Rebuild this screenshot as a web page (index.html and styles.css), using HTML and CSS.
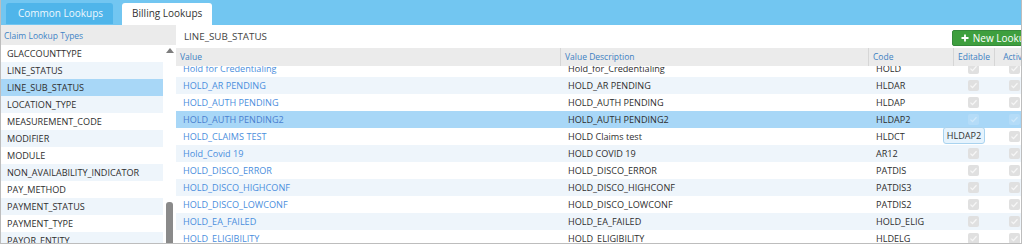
FILE: index.html
```html
<!DOCTYPE html>
<html>
<head>
<meta charset="utf-8">
<title>Lookups</title>
<link rel="stylesheet" href="styles.css">
</head>
<body>
<div class="app">
  <nav class="tabbar">
    <div class="tab">Common Lookups</div>
    <div class="tab active">Billing Lookups</div>
  </nav>
  <div class="main">
    <aside class="types">
      <div class="types-head">Claim Lookup Types</div>
      <div class="types-body">
        <ul class="type-list">
          <li>GLACCOUNTTYPE</li>
          <li>LINE_STATUS</li>
          <li class="selected">LINE_SUB_STATUS</li>
          <li>LOCATION_TYPE</li>
          <li>MEASUREMENT_CODE</li>
          <li>MODIFIER</li>
          <li>MODULE</li>
          <li>NON_AVAILABILITY_INDICATOR</li>
          <li>PAY_METHOD</li>
          <li>PAYMENT_STATUS</li>
          <li>PAYMENT_TYPE</li>
          <li>PAYOR_ENTITY</li>
        </ul>
        <div class="vscroll"><span class="arrow"></span><span class="thumb"></span></div>
      </div>
    </aside>
    <section class="detail">
      <div class="detail-inner">
        <div class="detail-head">
          <h2>LINE_SUB_STATUS</h2>
          <button class="btn-new"><svg width="8" height="8" viewBox="0 0 8 8"><path d="M4 0.5v7M0.5 4h7" stroke="#fff" stroke-width="1.8"/></svg>New Lookup</button>
        </div>
        <div class="grid">
          <div class="grid-head">
            <div class="hc">Value</div>
            <div class="hc">Value Description</div>
            <div class="hc">Code</div>
            <div class="hc center">Editable</div>
            <div class="hc center">Active</div>
          </div>
          <div class="grid-body">
            <div class="rows">
              <div class="row"><div class="c val">Hold for Credentialing</div><div class="c">Hold_for_Credentialing</div><div class="c">HOLD</div><div class="c cbc"><span class="cb"><svg viewBox="0 0 11 11"><path d="M2.5 5.6l2 2 4-4.4" fill="none" stroke-width="1.3"/></svg></span></div><div class="c cbc"><span class="cb"><svg viewBox="0 0 11 11"><path d="M2.5 5.6l2 2 4-4.4" fill="none" stroke-width="1.3"/></svg></span></div></div>
              <div class="row"><div class="c val">HOLD_AR PENDING</div><div class="c">HOLD_AR PENDING</div><div class="c">HLDAR</div><div class="c cbc"><span class="cb"><svg viewBox="0 0 11 11"><path d="M2.5 5.6l2 2 4-4.4" fill="none" stroke-width="1.3"/></svg></span></div><div class="c cbc"><span class="cb"><svg viewBox="0 0 11 11"><path d="M2.5 5.6l2 2 4-4.4" fill="none" stroke-width="1.3"/></svg></span></div></div>
              <div class="row"><div class="c val">HOLD_AUTH PENDING</div><div class="c">HOLD_AUTH PENDING</div><div class="c">HLDAP</div><div class="c cbc"><span class="cb"><svg viewBox="0 0 11 11"><path d="M2.5 5.6l2 2 4-4.4" fill="none" stroke-width="1.3"/></svg></span></div><div class="c cbc"><span class="cb"><svg viewBox="0 0 11 11"><path d="M2.5 5.6l2 2 4-4.4" fill="none" stroke-width="1.3"/></svg></span></div></div>
              <div class="row selected"><div class="c val">HOLD_AUTH PENDING2</div><div class="c">HOLD_AUTH PENDING2</div><div class="c">HLDAP2</div><div class="c cbc"><span class="cb"><svg viewBox="0 0 11 11"><path d="M2.5 5.6l2 2 4-4.4" fill="none" stroke-width="1.3"/></svg></span></div><div class="c cbc"><span class="cb"><svg viewBox="0 0 11 11"><path d="M2.5 5.6l2 2 4-4.4" fill="none" stroke-width="1.3"/></svg></span></div></div>
              <div class="row"><div class="c val">HOLD_CLAIMS TEST</div><div class="c">HOLD Claims test</div><div class="c">HLDCT</div><div class="c cbc"><span class="cb"><svg viewBox="0 0 11 11"><path d="M2.5 5.6l2 2 4-4.4" fill="none" stroke-width="1.3"/></svg></span></div><div class="c cbc"><span class="cb"><svg viewBox="0 0 11 11"><path d="M2.5 5.6l2 2 4-4.4" fill="none" stroke-width="1.3"/></svg></span></div></div>
              <div class="row"><div class="c val">Hold_Covid 19</div><div class="c">HOLD COVID 19</div><div class="c">AR12</div><div class="c cbc"><span class="cb"><svg viewBox="0 0 11 11"><path d="M2.5 5.6l2 2 4-4.4" fill="none" stroke-width="1.3"/></svg></span></div><div class="c cbc"><span class="cb"><svg viewBox="0 0 11 11"><path d="M2.5 5.6l2 2 4-4.4" fill="none" stroke-width="1.3"/></svg></span></div></div>
              <div class="row"><div class="c val">HOLD_DISCO_ERROR</div><div class="c">HOLD_DISCO_ERROR</div><div class="c">PATDIS</div><div class="c cbc"><span class="cb"><svg viewBox="0 0 11 11"><path d="M2.5 5.6l2 2 4-4.4" fill="none" stroke-width="1.3"/></svg></span></div><div class="c cbc"><span class="cb"><svg viewBox="0 0 11 11"><path d="M2.5 5.6l2 2 4-4.4" fill="none" stroke-width="1.3"/></svg></span></div></div>
              <div class="row"><div class="c val">HOLD_DISCO_HIGHCONF</div><div class="c">HOLD_DISCO_HIGHCONF</div><div class="c">PATDIS3</div><div class="c cbc"><span class="cb"><svg viewBox="0 0 11 11"><path d="M2.5 5.6l2 2 4-4.4" fill="none" stroke-width="1.3"/></svg></span></div><div class="c cbc"><span class="cb"><svg viewBox="0 0 11 11"><path d="M2.5 5.6l2 2 4-4.4" fill="none" stroke-width="1.3"/></svg></span></div></div>
              <div class="row"><div class="c val">HOLD_DISCO_LOWCONF</div><div class="c">HOLD_DISCO_LOWCONF</div><div class="c">PATDIS2</div><div class="c cbc"><span class="cb"><svg viewBox="0 0 11 11"><path d="M2.5 5.6l2 2 4-4.4" fill="none" stroke-width="1.3"/></svg></span></div><div class="c cbc"><span class="cb"><svg viewBox="0 0 11 11"><path d="M2.5 5.6l2 2 4-4.4" fill="none" stroke-width="1.3"/></svg></span></div></div>
              <div class="row"><div class="c val">HOLD_EA_FAILED</div><div class="c">HOLD_EA_FAILED</div><div class="c">HOLD_ELIG</div><div class="c cbc"><span class="cb"><svg viewBox="0 0 11 11"><path d="M2.5 5.6l2 2 4-4.4" fill="none" stroke-width="1.3"/></svg></span></div><div class="c cbc"><span class="cb"><svg viewBox="0 0 11 11"><path d="M2.5 5.6l2 2 4-4.4" fill="none" stroke-width="1.3"/></svg></span></div></div>
              <div class="row"><div class="c val">HOLD_ELIGIBILITY</div><div class="c">HOLD_ELIGIBILITY</div><div class="c">HLDELG</div><div class="c cbc"><span class="cb"><svg viewBox="0 0 11 11"><path d="M2.5 5.6l2 2 4-4.4" fill="none" stroke-width="1.3"/></svg></span></div><div class="c cbc"><span class="cb"><svg viewBox="0 0 11 11"><path d="M2.5 5.6l2 2 4-4.4" fill="none" stroke-width="1.3"/></svg></span></div></div>
            </div>
          </div>
        </div>
      </div>
      <div class="tooltip">HLDAP2</div>
    </section>
  </div>
</div>
</body>
</html>
```

FILE: styles.css
```css
* { box-sizing: border-box; }
html, body { margin: 0; padding: 0; background: #fff; }
body { font-family: "Open Sans", "Liberation Sans", sans-serif; color: #333; }

.app {
  width: 1022px;
  height: 244px;
  border: 1px solid #bdbdbd;
  border-top: 0;
  display: flex;
  flex-direction: column;
  overflow: hidden;
}

.tabbar {
  height: 25px;
  flex: none;
  background: #72c6f1;
  display: flex;
  align-items: stretch;
  gap: 9px;
  padding: 3px 0 0 5px;
}
.tab {
  font-size: 10px;
  line-height: 21px;
  padding: 0 10px 0 12px;
  color: #eef8fe;
  background: #4fb5ea;
  border-radius: 3px 3px 0 0;
  margin-bottom: 1px;
}
.tab.active {
  background: #fff;
  color: #333;
  padding: 0 10px;
  margin-bottom: 0;
}

.main { flex: 1; display: flex; min-height: 0; }

.types { width: 175px; flex: none; display: flex; flex-direction: column; }
.types-head {
  height: 20px;
  flex: none;
  background: #ebebeb;
  color: #3f84c6;
  font-size: 8.5px;
  padding-left: 3px;
  display: flex;
  align-items: center;
}
.types-body { flex: 1; display: flex; min-height: 0; overflow: hidden; }
.type-list { list-style: none; margin: 0; padding: 0; width: 162px; flex: none; }
.type-list li {
  height: 17px;
  line-height: 17px;
  padding-left: 6px;
  font-size: 9.1px;
  color: #2e2e2e;
  white-space: nowrap;
}
.type-list li:nth-child(even) { background: #eef5fb; }
.type-list li.selected { background: #a8d7f7; }

.vscroll { flex: 1; display: flex; flex-direction: column; align-items: center; }
.arrow {
  margin-top: 3px;
  width: 0; height: 0;
  border-left: 4px solid transparent;
  border-right: 4px solid transparent;
  border-bottom: 5px solid #7d7d7d;
}
.thumb {
  margin-top: auto;
  width: 7px;
  height: 41px;
  background: #8a8a8a;
  border-radius: 3px 3px 0 0;
}

.detail { flex: 1; position: relative; overflow: hidden; min-width: 0; }
.detail-inner { width: 866px; }
.detail-head {
  height: 23px;
  display: flex;
  align-items: center;
  justify-content: space-between;
}
.detail-head h2 {
  margin: 0;
  font-size: 9.8px;
  font-weight: 400;
  color: #444;
  padding-left: 8px;
}
.btn-new {
  height: 16px;
  margin-top: 2px;
  margin-right: 2px;
  padding: 0 8px;
  display: flex;
  align-items: center;
  gap: 4px;
  background: #3e9f3e;
  border: 1px solid #35893a;
  border-radius: 2px;
  color: #fff;
  font-family: "Open Sans", sans-serif;
  font-size: 10px;
}

.grid-head, .row {
  display: grid;
  grid-template-columns: 384px 308px 85px 41px 41px;
}
.grid-head { height: 18px; background: #ebebeb; }
.hc {
  font-size: 8.5px;
  line-height: 18px;
  color: #3d7fc2;
  padding-left: 4px;
  white-space: nowrap;
}
.hc + .hc { border-left: 1px solid #d6d6d6; }
.hc.center { text-align: center; padding-left: 0; }

.grid-body { height: 177px; overflow: hidden; }
.rows { margin-top: -6px; }
.row { height: 17px; }
.row:nth-child(even) { background: #eef5fb; }
.row.selected { background: #a8d7f7; }
.c {
  font-size: 9.1px;
  line-height: 17px;
  padding-left: 8px;
  white-space: nowrap;
  color: #2e2e2e;
}
.c.val { padding-left: 7px; color: #4a8edd; }
.row.selected .c.val { color: #4a7fcf; }
.c.cbc { padding-left: 0; display: flex; align-items: center; justify-content: center; }
.cb {
  width: 11px;
  height: 11px;
  border-radius: 2px;
  background: #e0e0e0;
  display: block;
}
.cb svg { display: block; width: 11px; height: 11px; stroke: #f6f6f6; }
.row.selected .cb { background: rgba(255, 255, 255, 0.14); }
.row.selected .cb svg { stroke: rgba(255, 255, 255, 0.35); }

.tooltip {
  position: absolute;
  left: 767px;
  top: 102px;
  width: 42px;
  height: 17px;
  background: #e5f3fd;
  border: 1px solid #a9d3ef;
  border-radius: 3px;
  font-size: 9.1px;
  line-height: 15px;
  text-align: center;
  color: #333;
}
```
